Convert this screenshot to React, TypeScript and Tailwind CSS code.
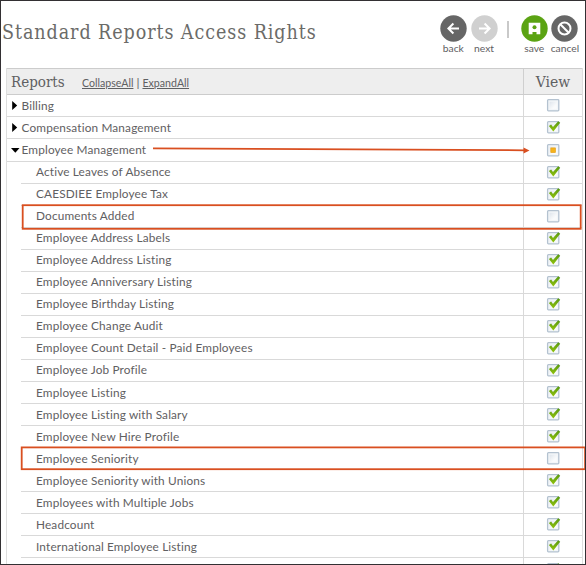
import React from "react";

type State = "off" | "on" | "some";
type Row = { name: string; state: State; level: 0 | 1; open?: boolean };

const rows: Row[] = [
  { name: "Billing", state: "off", level: 0 },
  { name: "Compensation Management", state: "on", level: 0 },
  { name: "Employee Management", state: "some", level: 0, open: true },
  { name: "Active Leaves of Absence", state: "on", level: 1 },
  { name: "CAESDIEE Employee Tax", state: "on", level: 1 },
  { name: "Documents Added", state: "off", level: 1 },
  { name: "Employee Address Labels", state: "on", level: 1 },
  { name: "Employee Address Listing", state: "on", level: 1 },
  { name: "Employee Anniversary Listing", state: "on", level: 1 },
  { name: "Employee Birthday Listing", state: "on", level: 1 },
  { name: "Employee Change Audit", state: "on", level: 1 },
  { name: "Employee Count Detail - Paid Employees", state: "on", level: 1 },
  { name: "Employee Job Profile", state: "on", level: 1 },
  { name: "Employee Listing", state: "on", level: 1 },
  { name: "Employee Listing with Salary", state: "on", level: 1 },
  { name: "Employee New Hire Profile", state: "on", level: 1 },
  { name: "Employee Seniority", state: "off", level: 1 },
  { name: "Employee Seniority with Unions", state: "on", level: 1 },
  { name: "Employees with Multiple Jobs", state: "on", level: 1 },
  { name: "Headcount", state: "on", level: 1 },
  { name: "International Employee Listing", state: "on", level: 1 },
];

function Check({ state }: { state: State }) {
  return (
    <svg className="block h-[15px] w-[15px] shrink-0" viewBox="0 0 15 15">
      <defs>
        <linearGradient id="well" x1="0" y1="0" x2="1" y2="1">
          <stop offset="0" stopColor="#dfe5ec" />
          <stop offset="0.7" stopColor="#fafbfc" />
        </linearGradient>
        <linearGradient id="tick" x1="0" y1="0" x2="0" y2="1">
          <stop offset="0" stopColor="#559812" />
          <stop offset="1" stopColor="#93c40c" />
        </linearGradient>
      </defs>
      <rect x="1.6" y="1.7" width="11.2" height="11.2" rx="0.8" fill="#f3f6f9" stroke="#b4c2d0" strokeWidth="1.3" />
      <rect x="3.6" y="3.7" width="7.2" height="7.2" fill="url(#well)" />
      {state === "on" && <path d="M2.9 6 5.1 4.5 7 7 12.2 1.3 14.2 2.7 7.3 11.5Z" fill="url(#tick)" />}
      {state === "some" && <rect x="4.8" y="4.9" width="4.7" height="4.7" fill="#f5b31c" stroke="#e39b12" strokeWidth="0.6" />}
    </svg>
  );
}

function Tool({ label, color, children }: { label: string; color: string; children: React.ReactNode }) {
  return (
    <div className="flex w-[30.7px] flex-col items-center">
      <svg className="h-[27px] w-[27px]" viewBox="0 0 27 27" fill="none" stroke="white" strokeWidth="2">
        <circle cx="13.5" cy="13.5" r="13.2" fill={color} stroke="none" />
        {children}
      </svg>
      <span className="text-[10.3px] leading-3 whitespace-nowrap">{label}</span>
    </div>
  );
}

export default function App() {
  return (
    <div className="relative flex h-[565px] w-[586px] flex-col overflow-hidden border border-[#333033] bg-white pl-[5px] font-['Lato',sans-serif] text-[#5f6062]">
      <header className="flex h-[67px] shrink-0 items-start">
        <h1 className="mt-[18px] -ml-[4px] w-[436px] font-['DejaVu_Serif_Condensed','DejaVu_Serif',serif] text-[19.5px] leading-[28px] tracking-[0.93px] whitespace-nowrap text-[#6b6b68]">
          Standard Reports Access Rights
        </h1>
        <div className="mt-[14px] flex">
          <Tool label="back" color="#666666">
            <path d="M19 13.5H8.5M13.4 8.5l-5 5 5 5" />
          </Tool>
          <Tool label="next" color="#d0d0d0">
            <path d="M8 13.5h10.5M13.6 8.5l5 5-5 5" />
          </Tool>
          <div className="mt-[6px] mr-[10px] ml-[8px] h-[17px] w-[1.5px] bg-[#c9c9c9]" />
          <Tool label="save" color="#5ba313">
            <path d="M7.7 7.7h11.6v11.6h-3.8v-2.3h-4v2.3H7.7Z" fill="white" stroke="none" />
            <circle cx="13.5" cy="12.3" r="2" fill="#5ba313" stroke="none" />
          </Tool>
          <Tool label="cancel" color="#666666">
            <circle cx="13.5" cy="13.5" r="6" />
            <path d="m9.3 9.3 8.4 8.4" />
          </Tool>
        </div>
      </header>
      <main className="w-[577px] shrink-0 border-x border-[#dedede]">
        <div className="flex h-[27.4px] border-y border-[#cccccc] bg-[#eeeeee] font-['DejaVu_Serif_Condensed','DejaVu_Serif',serif]">
          <div className="flex w-[517px] items-center border-r border-[#cfcfcf] pl-[4px]">
            <span className="w-[71px] text-[15px] leading-5">Reports</span>
            <span className="mt-[3px] font-['Lato',sans-serif] text-[10.6px] whitespace-nowrap">
              <a className="underline">CollapseAll</a>
              <span className="mx-[3px] text-[12px]">|</span>
              <a className="underline">ExpandAll</a>
            </span>
          </div>
          <div className="flex flex-1 items-center justify-center text-[15.5px] leading-5">View</div>
        </div>
        {rows.map((r) => (
          <div key={r.name} className={`flex h-[22.06px] ${r.level ? "pl-[14px]" : ""}`}>
            <div
              className={`flex items-center border-r border-b border-[#d9d9d9] ${r.level ? "w-[503px] pl-[15px]" : "w-[517px] pl-[4px]"}`}
            >
              {r.level === 0 && (
                <svg className="mr-[1.5px] h-[9px] w-[9px]" viewBox="0 0 9 9">
                  <path d={r.open ? "M0 2h8.5L4.3 6.8Z" : "M1.2 0 6.2 4.5 1.2 9Z"} fill="black" />
                </svg>
              )}
              <span className="text-[11.8px] leading-4 tracking-[0.16px] whitespace-nowrap">{r.name}</span>
            </div>
            <div className="flex flex-1 items-center justify-center border-b border-[#d9d9d9]">
              <Check state={r.state} />
            </div>
          </div>
        ))}
        <div className="flex h-[22px]">
          <div className="w-[517px] border-r border-[#d9d9d9]" />
          <div className="flex flex-1 items-center justify-center">
            <Check state="on" />
          </div>
        </div>
      </main>
      <svg className="absolute top-[-1px] left-[-1px] h-[565px] w-[586px]" viewBox="0 0 586 565" fill="none" stroke="#d94f20">
        <path d="M153 148.3 526 150.3" strokeWidth="1.7" />
        <path d="m523.5 147.6 6 2.9-6 2.9Z" fill="#d94f20" stroke="none" />
        <rect x="22.7" y="205.2" width="558" height="23.6" strokeWidth="1.8" />
        <rect x="21.7" y="447.4" width="563.4" height="21.8" strokeWidth="1.8" />
      </svg>
    </div>
  );
}
